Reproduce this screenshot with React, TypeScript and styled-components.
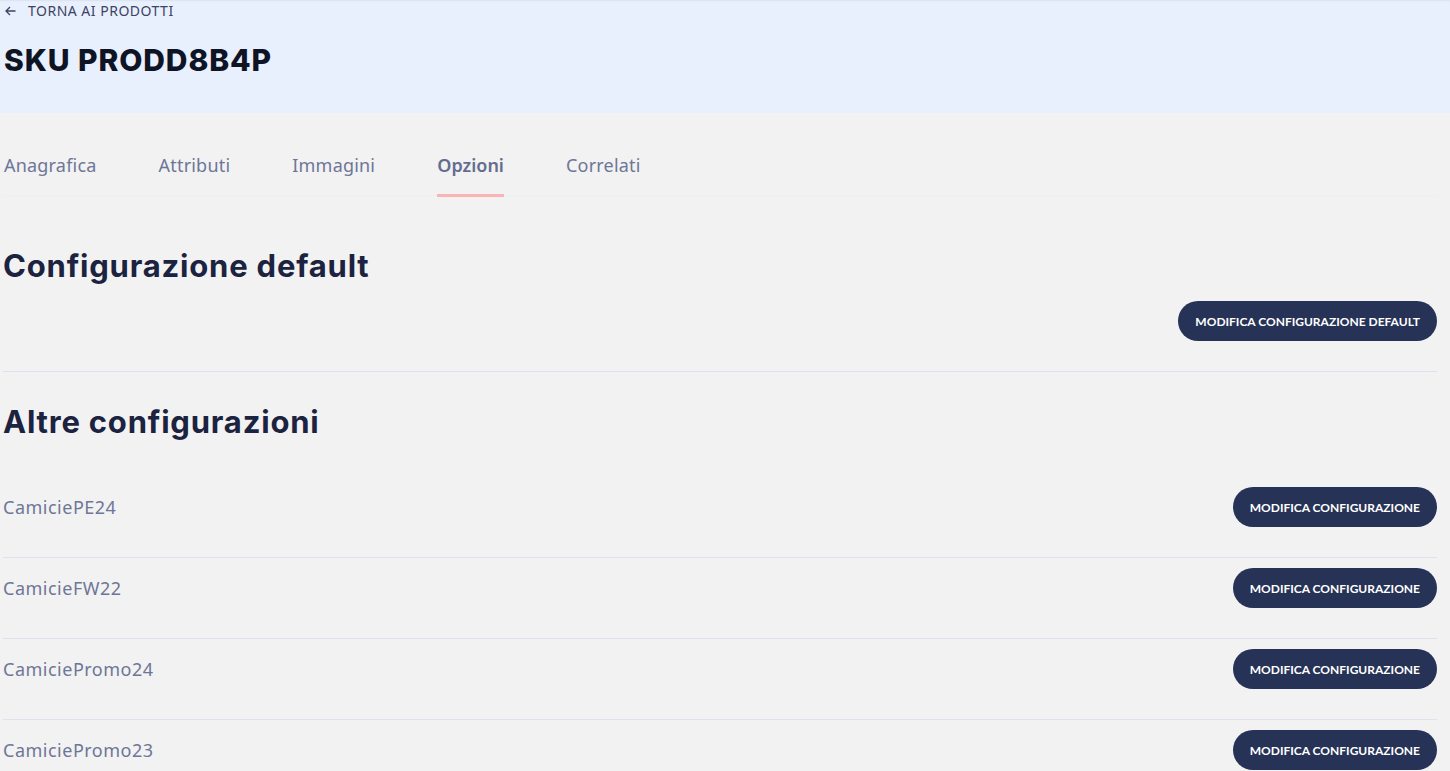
import React from "react";
import styled, { createGlobalStyle } from "styled-components";

const GlobalStyle = createGlobalStyle`
  html, body {
    margin: 0;
    padding: 0;
    background: #f2f2f2;
    font-family: "Noto Sans", "Liberation Sans", sans-serif;
    overflow: hidden;
  }
`;

const colors = {
    headerBg: "#e8effd",
    ink: "#1b2340",
    muted: "#6e7697",
    button: "#263256",
    line: "#dfe1ef",
    accent: "#f9b4b4",
};

const Page = styled.div`
    min-height: 771px;
`;

const Header = styled.header`
    background: ${colors.headerBg};
    height: 113px;
    padding: 0 4px;
    box-sizing: border-box;
    box-shadow: inset 0 2px 2px -1px rgba(0, 0, 0, 0.06);
`;

const BackLink = styled.a`
    display: flex;
    align-items: center;
    gap: 12px;
    height: 21px;
    padding-left: 1px;
    font-size: 14px;
    letter-spacing: 0.5px;
    color: #3c4363;
    text-transform: uppercase;
    cursor: pointer;
`;

const Title = styled.h1`
    margin: 19px 0 0;
    font-family: "Inter", "Liberation Sans", sans-serif;
    font-weight: 800;
    font-size: 30px;
    letter-spacing: 0.9px;
    line-height: 40px;
    color: #0f1424;
`;

const Content = styled.main`
    padding: 0 13px 0 3px;
`;

const Tabs = styled.nav`
    display: flex;
    gap: 62px;
    margin-top: 38px;
    padding-left: 1px;
    border-bottom: 1px solid #eceff3;
`;

const Tab = styled.div<{ $active?: boolean }>`
    font-size: 18px;
    letter-spacing: ${({ $active }) => ($active ? 0 : 0.2)}px;
    line-height: 26px;
    padding: 1px 0 16px;
    color: ${({ $active }) => ($active ? "#646d8e" : colors.muted)};
    font-weight: ${({ $active }) => ($active ? 600 : 400)};
    border-bottom: 3px solid ${({ $active }) => ($active ? colors.accent : "transparent")};
    margin-bottom: -2px;
`;

const SectionTitle = styled.h2<{ $top: number }>`
    margin: ${({ $top }) => $top}px 0 0;
    font-family: "Inter", "Liberation Sans", sans-serif;
    font-weight: 700;
    font-size: 31px;
    line-height: 40px;
    letter-spacing: 0.8px;
    color: ${colors.ink};
`;

const Row = styled.div<{ $top?: number }>`
    display: flex;
    align-items: center;
    justify-content: space-between;
    padding: ${({ $top }) => $top ?? 10}px 0 30px;
    border-bottom: 1px solid ${colors.line};
`;

const RowLabel = styled.span`
    font-size: 18px;
    letter-spacing: 0.5px;
    color: ${colors.muted};
`;

const Button = styled.button`
    height: 40px;
    padding: 0 17px;
    border: none;
    border-radius: 20px;
    background: ${colors.button};
    color: #fff;
    font-family: "Lato", "Liberation Sans", sans-serif;
    font-weight: 700;
    font-size: 12px;
    text-transform: uppercase;
    cursor: pointer;
`;

const configs = ["CamiciePE24", "CamicieFW22", "CamiciePromo24", "CamiciePromo23"];
const tabs = ["Anagrafica", "Attributi", "Immagini", "Opzioni", "Correlati"];

export default function App() {
    return (
        <Page>
            <GlobalStyle />
            <Header>
                <BackLink>
                    <svg width="11" height="10" viewBox="0 0 11 10" fill="none" stroke="#3c4363" strokeWidth="1.3">
                        <path d="M10.5 5H1M5 1L1 5l4 4" />
                    </svg>
                    Torna ai prodotti
                </BackLink>
                <Title>SKU PRODD8B4P</Title>
            </Header>
            <Content>
                <Tabs>
                    {tabs.map((t) => (
                        <Tab key={t} $active={t === "Opzioni"}>
                            {t}
                        </Tab>
                    ))}
                </Tabs>
                <SectionTitle $top={50}>Configurazione default</SectionTitle>
                <Row $top={15}>
                    <span />
                    <Button>Modifica configurazione default</Button>
                </Row>
                <SectionTitle $top={30}>Altre configurazioni</SectionTitle>
                {configs.map((c, i) => (
                    <Row key={c} $top={i === 0 ? 45 : 10}>
                        <RowLabel>{c}</RowLabel>
                        <Button>Modifica configurazione</Button>
                    </Row>
                ))}
            </Content>
        </Page>
    );
}
